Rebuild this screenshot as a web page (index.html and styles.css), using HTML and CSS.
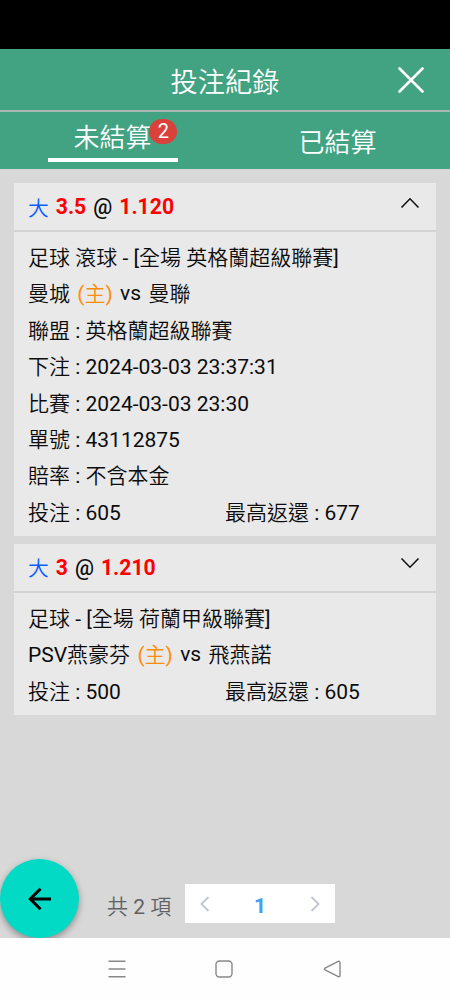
FILE: index.html
```
<!DOCTYPE html>
<html lang="zh-Hant">
<head>
<meta charset="utf-8">
<meta name="viewport" content="width=device-width, initial-scale=1">
<title>投注紀錄</title>
<link rel="stylesheet" href="styles.css">
</head>
<body>
<div class="screen">
  <div class="statusbar"></div>
  <header class="header">
    <h1 class="title">投注紀錄</h1>
    <svg class="close" viewBox="0 0 28 28"><path d="M2.5 2.5 25.500 25.500M25.500 2.500 2.500 25.500"/></svg>
  </header>
  <nav class="tabs">
    <div class="tab active"><span class="label">未結算<span class="badge">2</span></span></div>
    <div class="tab"><span class="label">已結算</span></div>
  </nav>
  <main class="list">
    <section class="card">
      <div class="card-head">
        <span class="pick">大</span><b class="odds">3.5</b><b class="at">@</b><b class="odds">1.120</b>
        <svg class="chevron" viewBox="0 0 20 12"><path d="M1.500 10.500 10 1.800 18.500 10.500"/></svg>
      </div>
      <div class="card-body">
        <div class="row">足球 滾球 - [全場 英格蘭超級聯賽]</div>
        <div class="row teams"><span>曼城</span><span class="home">(主)</span><span class="vs">vs</span><span>曼聯</span></div>
        <div class="row">聯盟 : 英格蘭超級聯賽</div>
        <div class="row">下注 : 2024-03-03 23:37:31</div>
        <div class="row">比賽 : 2024-03-03 23:30</div>
        <div class="row">單號 : 43112875</div>
        <div class="row">賠率 : 不含本金</div>
        <div class="row split"><span>投注 : 605</span><span>最高返還 : 677</span></div>
      </div>
    </section>
    <section class="card">
      <div class="card-head">
        <span class="pick">大</span><b class="odds">3</b><b class="at">@</b><b class="odds">1.210</b>
        <svg class="chevron" viewBox="0 0 20 12"><path d="M1.500 1.500 10 10.200 18.500 1.500"/></svg>
      </div>
      <div class="card-body">
        <div class="row">足球 - [全場 荷蘭甲級聯賽]</div>
        <div class="row teams"><span>PSV燕豪芬</span><span class="home">(主)</span><span class="vs">vs</span><span>飛燕諾</span></div>
        <div class="row split"><span>投注 : 500</span><span>最高返還 : 605</span></div>
      </div>
    </section>
  </main>
  <footer class="pagination">
    <div class="back"><svg viewBox="0 0 24 24"><path d="M23 12H3M12.500 1.800 2.300 12 12.500 22.200"/></svg></div>
    <span class="total">共 2 項</span>
    <div class="pager">
      <svg viewBox="0 0 10 16"><path d="M8.500 1 1.500 8 8.500 15"/></svg>
      <b>1</b>
      <svg viewBox="0 0 10 16"><path d="M1.500 1 8.500 8 1.500 15"/></svg>
    </div>
  </footer>
  <div class="navbar">
    <svg viewBox="0 0 18 18"><path d="M.5 1.200H17.500M.5 9H17.500M.5 16.800H17.500"/></svg>
    <svg viewBox="0 0 18 18"><rect x="1" y="1" width="16" height="16" rx="3.500"/></svg>
    <svg viewBox="0 0 18 18"><path d="M15.300 1.300 2 8.200Q.8 9 2 9.800L15.300 16.700Q17 17 17 15.500V2.500Q17 1 15.300 1.300Z"/></svg>
  </div>
</div>
</body>
</html>
```
FILE: styles.css
```
* { box-sizing: border-box; }
body {
  margin: 0;
  background: #d8d8d8;
  color: #0c0c0c;
  font-family: Roboto, "Noto Sans CJK TC DemiLight", "Noto Sans CJK TC", sans-serif;
  font-weight: 400;
  font-size: 21px;
}
svg { fill: none; display: block; }
.screen { height: 1000px; display: flex; flex-direction: column; overflow: hidden; }
.statusbar { height: 49px; background: #000; }
.header {
  height: 63px;
  background: #41a381;
  border-bottom: 2px solid #a9b8b1;
  display: grid;
  grid-template-columns: 1fr auto 1fr;
  align-items: center;
  color: #fff;
}
.title { grid-column: 2; margin: 6px 0 0; font-size: 27.2px; font-weight: 350; line-height: 40px; }
.close { width: 28px; height: 28px; justify-self: end; margin-right: 25px; stroke: #fff; stroke-width: 2.6; stroke-linecap: round; }
.tabs {
  height: 57px;
  background: #41a381;
  color: #fff;
  font-size: 26px;
  font-weight: 350;
  display: grid;
  grid-template-columns: 1fr 1fr;
}
.tab { display: flex; flex-direction: column; align-items: center; justify-content: center; padding-top: 4px; }
.tab.active { padding-top: 0; }
.tab.active::after { content: ""; width: 130px; height: 4px; background: #fff; margin-top: 1px; }
.label { position: relative; line-height: 40px; }
.active .label { line-height: 38px; }
.badge {
  position: absolute;
  left: 76px;
  top: 0;
  width: 28px;
  height: 25px;
  border-radius: 13px;
  background: #db413b;
  font-size: 20px;
  font-weight: 400;
  line-height: 24px;
  text-align: center;
}
.list { padding: 14px 14px 0; display: flex; flex-direction: column; gap: 7.5px; flex: 1; }
.card { background: #e9e9e9; }
.card-head {
  height: 49px;
  border-bottom: 2px solid #d3d3d3;
  padding: 0 16px 0 14px;
  display: flex;
  align-items: center;
  gap: 7px;
  font-size: 22px;
}
.card-head b { font-weight: 700; font-size: 21.2px; }
.card-head .at { font-weight: 500; }
.pick { color: #0b5cff; font-size: 20.8px; }
.card-head .odds { color: #fe0000; }
.chevron { width: 20px; height: 12px; margin: -8px 0 0 auto; stroke: #111; stroke-width: 1.6; }
.card-body { padding: 8px 14px 5.2px; }
.row { height: 36.4px; line-height: 36.4px; white-space: nowrap; }
.teams { display: flex; gap: 7.3px; }
.vs { line-height: 34px; }
.home { color: #ff8c0a; }
.split { display: grid; grid-template-columns: 197px 1fr; }
.pagination { height: 79px; display: flex; align-items: flex-start; color: #606266; }
.back {
  width: 79px;
  height: 79px;
  border-radius: 50%;
  background: #03dac6;
  box-shadow: 0 3px 7px rgba(0, 0, 0, .35);
  display: grid;
  place-items: center;
}
.back svg { width: 24px; height: 24px; stroke: #000; stroke-width: 3; }
.total { margin: 29px 0 0 28px; width: 78px; line-height: 38px; white-space: nowrap; }
.pager { width: 150px; height: 39px; margin-top: 25px; background: #fff; display: flex; align-items: center; justify-content: space-between; padding: 0 15px; }
.pager svg { width: 10px; height: 16px; stroke: #c0c4cc; stroke-width: 1.8; }
.pager b { color: #409eff; font-weight: 700; padding-top: 5px; }
.navbar { height: 62px; background: #fefefe; position: relative; display: flex; gap: 89.500px; padding: 22px 0 0 107.500px; }
.navbar svg { width: 18px; height: 18px; stroke: #888; stroke-width: 1.4; }
```
